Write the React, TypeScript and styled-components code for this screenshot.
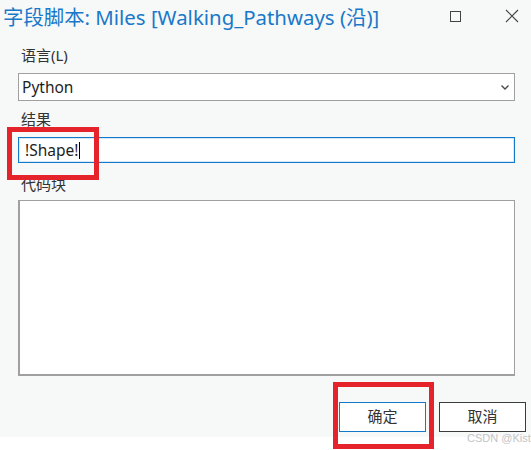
import React from 'react'
import styled, { createGlobalStyle } from 'styled-components'

const GlobalStyle = createGlobalStyle`
  html, body {
    margin: 0;
    padding: 0;
    background: #ffffff;
  }
  * {
    box-sizing: border-box;
  }
`

const FONT = `"Noto Sans", "Noto Sans CJK SC", sans-serif`

// page frame
const Page = styled.div`
  position: relative;
  width: 531px;
  height: 450px;
  background: #ffffff;
  overflow: hidden;
  font-family: ${FONT};
`

const Dialog = styled.div`
  height: 437px;
  background: #f7f8f8;
  display: flex;
  flex-direction: column;
`

const TitleBar = styled.div`
  height: 45px;
  display: flex;
  align-items: flex-start;
  padding: 2px 0 0 3px;
`

const Title = styled.div`
  flex: 1;
  font-size: 20.4px;
  line-height: 30px;
  color: #1978c8;
  white-space: nowrap;
`

const WindowButtons = styled.div`
  display: flex;
  align-items: center;
  gap: 43px;
  padding: 7px 12px 0 0;
`

const Body = styled.div`
  flex: 1;
  display: flex;
  flex-direction: column;
  padding: 0 16px 0 18px;
`

const Label = styled.div<{ $gap: number }>`
  font-size: 15px;
  line-height: 20px;
  color: #333333;
  padding-left: 3px;
  margin-bottom: ${(p) => p.$gap}px;
`

const SelectBox = styled.div`
  height: 28px;
  background: #ffffff;
  border: 1px solid #a0a0a0;
  display: flex;
  align-items: center;
  justify-content: space-between;
  padding: 0 5px 0 3px;
  font-size: 15.5px;
  color: #1e1e1e;
  margin-bottom: 8px;
`

const TextInput = styled.div`
  height: 26px;
  background: #ffffff;
  border: 1px solid #1479c9;
  box-shadow: inset 0 0 0 1px #d6e8f7;
  display: flex;
  align-items: center;
  padding-left: 6px;
  font-size: 15.5px;
  color: #1e1e1e;
  margin-bottom: 11px;
`

const Caret = styled.span`
  display: inline-block;
  width: 1px;
  height: 17px;
  background: #000000;
  margin-left: 1px;
`

const CodeArea = styled.div`
  height: 176px;
  background: #ffffff;
  border: 1px solid #a0a0a0;
  border-left-width: 2px;
  border-bottom-width: 2px;
`

const Footer = styled.div`
  display: flex;
  justify-content: flex-end;
  gap: 13px;
  padding: 26px 5px 0 0;
  margin-right: -16px;
`

const Button = styled.button<{ $primary?: boolean }>`
  width: 87px;
  height: 30px;
  background: #ffffff;
  border: 1px solid ${(p) => (p.$primary ? '#1479c9' : '#3c3c3c')};
  font-family: ${FONT};
  font-size: 15px;
  line-height: 26px;
  color: #333333;
  padding: 0 0 2px;
`

// red annotation rectangles drawn over the screenshot
const Mark = styled.div`
  position: absolute;
  border: 5px solid #e5232a;
  pointer-events: none;
`

const Watermark = styled.div`
  position: absolute;
  left: 467px;
  top: 432px;
  font-family: "Liberation Sans", sans-serif;
  font-size: 11px;
  color: #c4c4c4;
  white-space: nowrap;
`

const MaxIcon = () => (
  <svg width="13" height="13" viewBox="0 0 13 13">
    <rect x="1.5" y="1.5" width="10" height="10" fill="none" stroke="#444" strokeWidth="1" />
  </svg>
)

const CloseIcon = () => (
  <svg width="14" height="14" viewBox="0 0 14 14">
    <path d="M1 1 L13 13 M13 1 L1 13" stroke="#444" strokeWidth="1.1" />
  </svg>
)

const Chevron = () => (
  <svg width="8" height="5" viewBox="0 0 8 5">
    <path d="M0.5 0.5 L4 4 L7.5 0.5" fill="none" stroke="#444" strokeWidth="1.3" />
  </svg>
)

export default function App() {
  return (
    <Page>
      <GlobalStyle />
      <Dialog>
        <TitleBar>
          <Title>字段脚本: Miles [Walking_Pathways (沿)]</Title>
          <WindowButtons>
            <MaxIcon />
            <CloseIcon />
          </WindowButtons>
        </TitleBar>
        <Body>
          <Label $gap={8}>语言(L)</Label>
          <SelectBox>
            <span>Python</span>
            <Chevron />
          </SelectBox>
          <Label $gap={8}>结果</Label>
          <TextInput>
            !Shape!<Caret />
          </TextInput>
          <Label $gap={6}>代码块</Label>
          <CodeArea />
          <Footer>
            <Button $primary>确定</Button>
            <Button>取消</Button>
          </Footer>
        </Body>
      </Dialog>
      <Mark style={{ left: 7, top: 127, width: 92, height: 53 }} />
      <Mark style={{ left: 333, top: 382, width: 101, height: 67 }} />
      <Watermark>CSDN @Kistra</Watermark>
    </Page>
  )
}
